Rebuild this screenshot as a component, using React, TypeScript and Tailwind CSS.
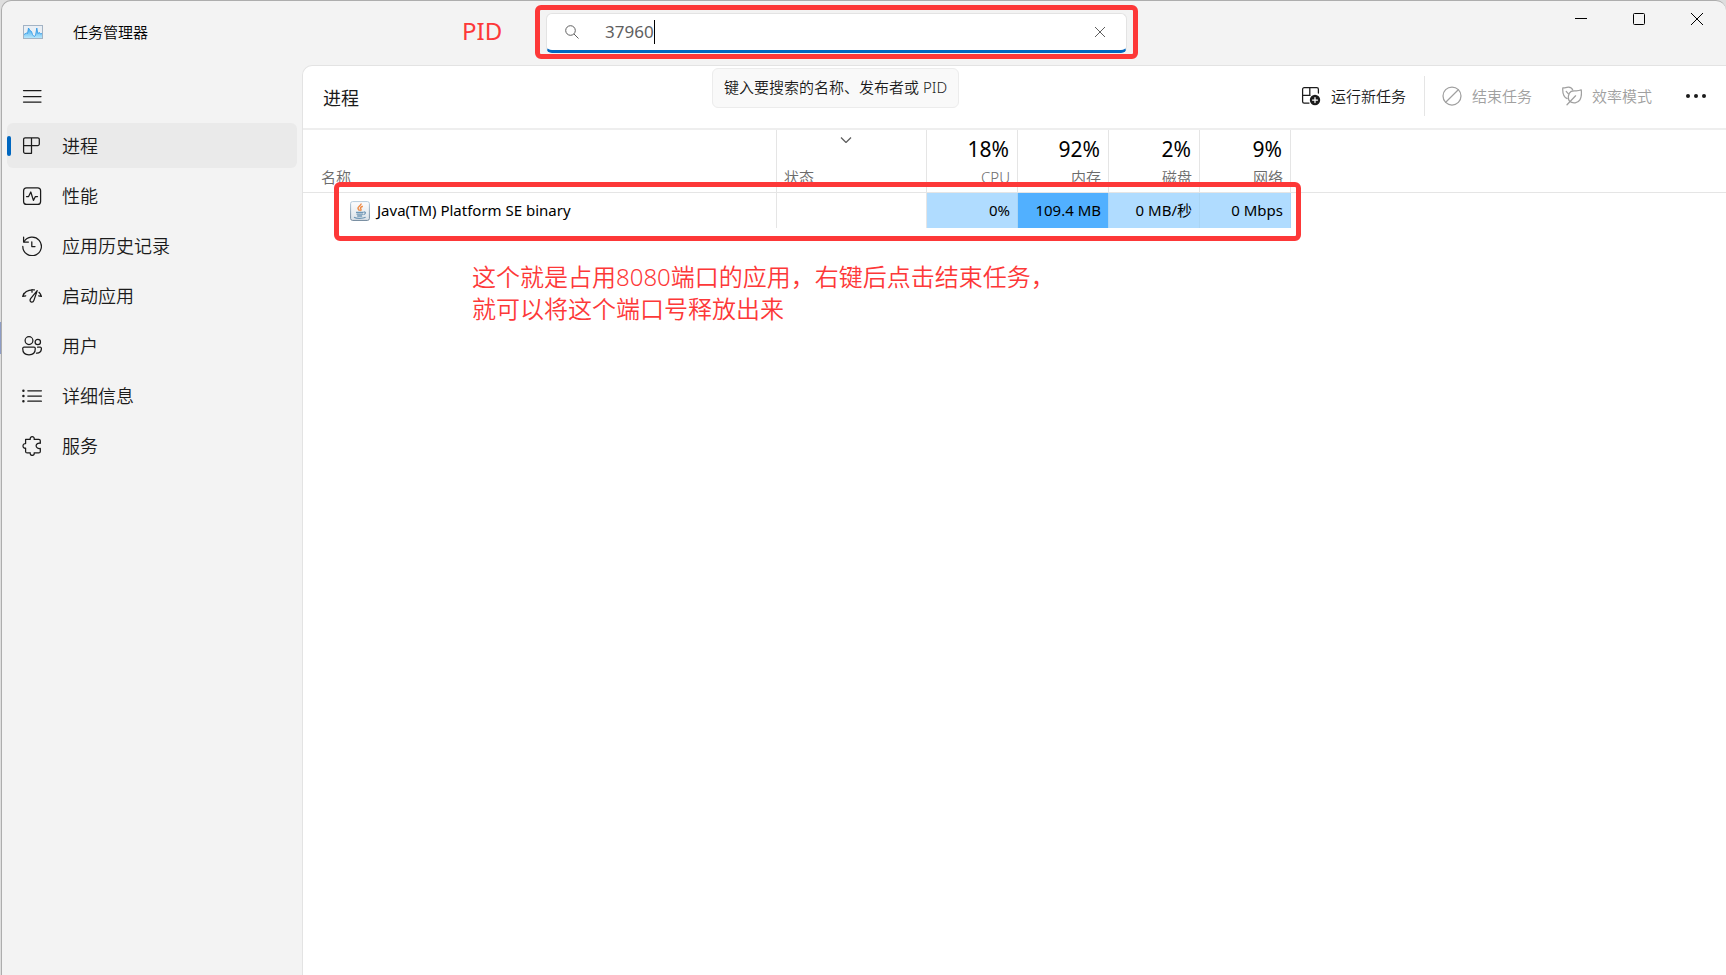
import { ReactNode, useState } from 'react';

interface IconProps {
  children: ReactNode;
}

function Icon({ children }: IconProps) {
  return (
    <svg
      className="size-5 shrink-0"
      viewBox="0 0 20 20"
      fill="none"
      stroke="currentColor"
      strokeWidth="1.25"
      strokeLinecap="round"
      strokeLinejoin="round"
      aria-hidden="true"
    >
      {children}
    </svg>
  );
}

const navItems = [
  {
    id: 'processes',
    label: '进程',
    icon: (
      <path d="M9.5 1.8V17.3H3.2a1.6 1.6 0 0 1-1.6-1.6V3.4a1.6 1.6 0 0 1 1.6-1.6H15.7a1.6 1.6 0 0 1 1.6 1.6V8a1.6 1.6 0 0 1-1.6 1.6H1.6" />
    ),
  },
  {
    id: 'performance',
    label: '性能',
    icon: (
      <>
        <rect x="1.6" y="1.8" width="17" height="16.6" rx="3" />
        <path d="M4.5 10.5H6.6L8.8 6l2.6 8.4 2-3.9h2.1" />
      </>
    ),
  },
  {
    id: 'history',
    label: '应用历史记录',
    icon: (
      <>
        <path d="M1.6 1.2V6H6.4" />
        <path d="M2 5.8A9.3 9.3 0 1 1 .8 10.4" />
        <path d="M9.8 5.8V10.6H13" />
      </>
    ),
  },
  {
    id: 'startup',
    label: '启动应用',
    icon: (
      <>
        <path d="M.7 10.4C2.3 5.8 6 3.4 12.4 3.9M.7 10.4l1.1-3M.7 10.4 3.8 9.8M10 3.7V6.2" />
        <path d="M15.2 4.6 8.6 12.6C7.4 14.4 8.3 16 9.6 16.2c1.2.1 2-.7 2.3-1.8L15.2 4.6Z" />
        <path d="M17 6.3c1.1 1 1.9 2.3 2.4 4.1L16.6 9.8" />
      </>
    ),
  },
  {
    id: 'users',
    label: '用户',
    icon: (
      <>
        <circle cx="7" cy="4.6" r="3.9" />
        <circle cx="15.8" cy="6" r="2.7" />
        <path d="M2 11.2h10a1.3 1.3 0 0 1 1.3 1.3c0 4-2.5 6.3-6.3 6.3S.7 16.5.7 12.5A1.3 1.3 0 0 1 2 11.2Z" />
        <path d="M15.6 11.2h2.6a1.2 1.2 0 0 1 1.2 1.3c0 3-1.9 4.9-4.9 4.7" />
      </>
    ),
  },
  {
    id: 'details',
    label: '详细信息',
    icon: (
      <>
        <path d="M5.8 4.8H19.4M5.8 10H19.4M5.8 15.2H19.4" />
        <path strokeWidth="2.5" d="M1.4 4.8h.01M1.4 10h.01M1.4 15.2h.01" />
      </>
    ),
  },
  {
    id: 'services',
    label: '服务',
    icon: (
      <path d="M3.6 3.3H8.3C7.9 1.7 9 .7 10.2.7s2.4 1 1.9 2.6h4.7a1.5 1.5 0 0 1 1.5 1.5V7.3c-2-.6-4.2.6-4.2 2.5s2.2 3.3 4.2 2.6v3a1.5 1.5 0 0 1-1.5 1.5H12.1c.5 1.6-.7 2.5-1.9 2.5s-2.3-.9-1.9-2.5H5.1a1.5 1.5 0 0 1-1.5-1.5V12.2C2.1 12.5 1 11.3 1 9.9s1.1-2.7 2.6-2.3Z" />
    ),
  },
];

const usageColumns = [
  { label: 'CPU', total: '18%', value: '0%', busy: false },
  { label: '内存', total: '92%', value: '109.4 MB', busy: true },
  { label: '磁盘', total: '2%', value: '0 MB/秒', busy: false },
  { label: '网络', total: '9%', value: '0 Mbps', busy: false },
];

function TaskManagerLogo() {
  return (
    <svg className="h-[14px] w-5" viewBox="0 0 20 14" aria-hidden="true">
      <defs>
        <linearGradient id="graph" x1="0" y1="0" x2="0" y2="1">
          <stop offset="0" stopColor="#3fa9ee" />
          <stop offset="1" stopColor="#b5e6fc" />
        </linearGradient>
      </defs>
      <rect x=".5" y=".5" width="19" height="13" fill="#e9eff5" stroke="#a3b3c4" />
      <path
        fill="url(#graph)"
        d="M1 9.5 3.5 8 4.5 8.5 5.5 3 7 5.5 8.5 6.5 9.5 9.5 11 11.5 12.5 10.5 13.8 3 14.8 8.5 16.5 7.5 17.5 9 19 8.5V13H1Z"
      />
      <path
        fill="none"
        stroke="#2b95e3"
        strokeWidth=".8"
        d="M1 9.5 3.5 8 4.5 8.5 5.5 3 7 5.5 8.5 6.5 9.5 9.5 11 11.5 12.5 10.5 13.8 3 14.8 8.5 16.5 7.5 17.5 9 19 8.5"
      />
    </svg>
  );
}

function JavaIcon() {
  return (
    <svg className="size-5 shrink-0" viewBox="0 0 20 20" fill="none" aria-hidden="true">
      <defs>
        <linearGradient id="tile" x1="0" y1="0" x2="0" y2="1">
          <stop offset="0" stopColor="#fdfdfe" />
          <stop offset="1" stopColor="#dbe2e8" />
        </linearGradient>
        <linearGradient id="edge" x1="0" y1="0" x2="0" y2="1">
          <stop offset="0" stopColor="#b4cadb" />
          <stop offset="1" stopColor="#6d8499" />
        </linearGradient>
      </defs>
      <rect x=".6" y=".6" width="18.8" height="18.8" rx="2" fill="url(#tile)" stroke="url(#edge)" />
      <path
        d="M11 2.5c.8 2-3.6 3-3 5 .3 1 1.200 1.500 1.500 2.300M12.800 5.200c-2.400 1-2.800 2-1.900 3 .5.700 0 1.200-.5 1.600"
        stroke="#ee8b46"
        strokeWidth="1.5"
      />
      <path
        d="M6 11.300h7.500M6.500 13.200h6.500M7.200 15h5M13.800 11c2.300-.3 2 2-.3 2.600M4 16.200c2.500 1.500 9 1.400 11.600 0"
        stroke="#6f96b5"
        strokeWidth="1.3"
      />
    </svg>
  );
}

function TitleBar() {
  const [query, setQuery] = useState('37960');

  return (
    <header className="relative grid h-16 grid-cols-[544px_1fr_599px]">
      <div className="flex items-center gap-[30px] pb-[2px] pl-[21px]">
        <TaskManagerLogo />
        <h1 className="text-[15px] leading-5 font-[350] text-black">任务管理器</h1>
      </div>

      <div className="relative mt-3 h-10">
        <label className="flex h-full items-center overflow-hidden rounded-md border border-[#e3e3e3] border-b-[3px] border-b-[#0067c0] bg-white pl-[18px]">
          <svg className="size-[14px] shrink-0" viewBox="0 0 14 14" fill="none" stroke="#5f5f5f" aria-hidden="true">
            <circle cx="5.5" cy="5.5" r="4.8" />
            <path d="M9 9l4.5 4.5" />
          </svg>
          <input
            type="text"
            aria-label="搜索"
            value={query}
            onChange={(e) => setQuery(e.target.value)}
            className="ml-[26px] w-[49px] text-[17px] leading-6 text-[#5f5f5f] outline-none"
          />
          <span className="h-6 w-px bg-black" />
          <button
            aria-label="清除"
            onClick={() => setQuery('')}
            className="mr-4 ml-auto flex size-5 items-center justify-center"
          >
            <svg className="size-3" viewBox="0 0 12 12" stroke="#5f5f5f" aria-hidden="true">
              <path d="M1 1l10 10M11 1L1 11" />
            </svg>
          </button>
        </label>
        <div className="pointer-events-none absolute -inset-x-[11px] -top-2 -bottom-[6px] rounded-md border-[5px] border-[#fd3838]" />
        <div className="absolute top-[55px] left-[166px] z-10 flex h-10 items-center rounded-md border border-[#ececec] bg-[#f9f9f9] px-[11px] pb-[2px] text-[15px] font-[350] whitespace-nowrap text-[#1b1b1b]">
          键入要搜索的名称、发布者或 PID
        </div>
      </div>

      <div className="flex justify-end text-black">
        <button aria-label="最小化" className="flex h-9 w-[58px] items-center justify-center">
          <svg className="size-3" viewBox="0 0 12 12" stroke="currentColor" aria-hidden="true">
            <path d="M0 5.5H12" />
          </svg>
        </button>
        <button aria-label="最大化" className="flex h-9 w-[58px] items-center justify-center">
          <svg className="size-3" viewBox="0 0 12 12" fill="none" stroke="currentColor" aria-hidden="true">
            <rect x=".5" y=".5" width="11" height="11" rx="1" />
          </svg>
        </button>
        <button aria-label="关闭" className="flex h-9 w-[58px] items-center justify-center">
          <svg className="size-3" viewBox="0 0 12 12" stroke="currentColor" aria-hidden="true">
            <path d="M0 0l12 12M12 0L0 12" />
          </svg>
        </button>
      </div>

      <span className="absolute top-3 left-[460px] text-[24px] leading-9 text-[#fd3838]">PID</span>
    </header>
  );
}

function Sidebar() {
  const [active, setActive] = useState('processes');

  return (
    <nav className="w-[300px] shrink-0 px-[5px] pt-[9px]">
      <button aria-label="打开导航" className="mb-[5px] flex h-11 items-center px-[15px] text-[#1b1b1b]">
        <Icon>
          <path d="M1.5 4.5H19M1.5 10.5H19M1.5 16H19" />
        </Icon>
      </button>
      <div className="flex flex-col gap-[5px]">
        {navItems.map((item) => (
          <button
            key={item.id}
            onClick={() => setActive(item.id)}
            className={`relative flex h-[45px] items-center gap-5 rounded-md px-[15px] text-left text-[18px] font-[350] text-[#1b1b1b] ${
              active === item.id ? 'bg-[#eaeaea]' : ''
            }`}
          >
            {active === item.id && (
              <span className="absolute top-[13px] left-0 h-5 w-1 rounded-full bg-[#0067c0]" />
            )}
            <Icon>{item.icon}</Icon>
            <span className="pt-[2px]">{item.label}</span>
          </button>
        ))}
      </div>
    </nav>
  );
}

function Toolbar() {
  return (
    <div className="flex h-16 items-center border-b-2 border-[#eeeeee] pr-[10px] pl-5">
      <h2 className="pt-[2px] text-[18px] text-[#1b1b1b]">进程</h2>
      <div className="ml-auto flex items-center pb-[2px] text-[15px] font-[350] text-[#1b1b1b]">
        <button className="flex items-center gap-[10px] pr-[18px]">
          <Icon>
            <path d="M8 17H3.2a1.6 1.6 0 0 1-1.6-1.6V3.2a1.6 1.6 0 0 1 1.6-1.6H15.8a1.6 1.6 0 0 1 1.6 1.6V7M8.8 1.6V9.4M1.6 9.4H9" />
            <circle cx="14" cy="14" r="5.2" fill="currentColor" stroke="none" />
            <path stroke="#fff" d="M14 11.5v5M11.5 14h5" />
          </Icon>
          运行新任务
        </button>
        <div className="h-10 w-px bg-[#e5e5e5]" />
        <button disabled className="flex items-center gap-[10px] pr-[15px] pl-[17px] text-[#a0a0a0]">
          <Icon>
            <circle cx="10" cy="10" r="9" />
            <path d="M3.7 16.3 16.3 3.7" />
          </Icon>
          结束任务
        </button>
        <button disabled className="flex items-center gap-[10px] pr-6 pl-[15px] text-[#a0a0a0]">
          <Icon>
            <path d="M5.2 12.6C1.6 11 .4 7 .8 1.8c2 .6 3.300-.8 5.600-.7 2.200.1 3.800 1.200 4.400 3" />
            <path d="M7.600 15.300C5.400 12 6.200 7.200 9.200 5.400c3-1.600 5.600.6 10-1.600.5 3.700.3 7.500-1.300 10-2.100 3.300-6.900 4.300-10.300 1.500Z" />
            <path d="M5 18.800 13.600 9.800M4.200 5.400 6.400 7.800" />
          </Icon>
          效率模式
        </button>
        <button aria-label="更多选项" className="flex size-10 items-center justify-center">
          <svg className="size-5" viewBox="0 0 20 20" fill="currentColor" aria-hidden="true">
            <circle cx="2" cy="10" r="2" />
            <circle cx="10" cy="10" r="2" />
            <circle cx="18" cy="10" r="2" />
          </svg>
        </button>
      </div>
    </div>
  );
}

function ProcessTable() {
  return (
    <div className="relative">
      <table className="w-full table-fixed border-separate border-spacing-0 text-[15px]">
        <colgroup>
          <col className="w-[474px]" />
          <col className="w-[150px]" />
          <col className="w-[91px]" />
          <col className="w-[91px]" />
          <col className="w-[91px]" />
          <col className="w-[91px]" />
          <col />
        </colgroup>
        <thead>
          <tr className="h-[63px] text-[#6b6b6b]">
            <th className="border-r border-b border-[#e5e5e5] pb-[5px] pl-[18px] text-left align-bottom leading-5 font-[350]">
              名称
            </th>
            <th className="border-r border-b border-[#e5e5e5] pr-[18px] pb-[5px] pl-[7px] text-left align-bottom leading-5 font-[350]">
              <svg className="mx-auto mb-6 h-[6px] w-3" viewBox="0 0 12 6" fill="none" stroke="#5f5f5f" strokeWidth="1.3" aria-hidden="true">
                <path d="M1 .5l5 5 5-5" />
              </svg>
              状态
            </th>
            {usageColumns.map((col) => (
              <th
                key={col.label}
                className="border-r border-b border-[#e5e5e5] pr-[7px] pb-[5px] text-right align-bottom leading-5 font-[350]"
              >
                <span className="mb-1 block pr-px text-[21px] leading-7 font-normal text-black">{col.total}</span>
                {col.label}
              </th>
            ))}
            <th className="border-b border-[#e5e5e5]" />
          </tr>
        </thead>
        <tbody>
          <tr className="h-[35px] text-black">
            <td className="border-r border-[#e5e5e5] pl-[47px]">
              <div className="flex items-center gap-[7px]">
                <JavaIcon />
                Java(TM) Platform SE binary
              </div>
            </td>
            <td className="border-r border-[#e5e5e5]" />
            {usageColumns.map((col) => (
              <td
                key={col.label}
                className={`border-r border-[#a9d5f5] pr-[7px] text-right whitespace-nowrap ${
                  col.busy ? 'bg-[#51b0ff]' : 'bg-[#b0dcff]'
                }`}
              >
                {col.value}
              </td>
            ))}
            <td />
          </tr>
        </tbody>
      </table>

      <div className="pointer-events-none absolute top-[52px] left-[31px] h-[59px] w-[967px] rounded-md border-[5px] border-[#fd3838]" />
      <p className="absolute top-[131px] left-[169px] text-[24px] leading-8 font-[350] whitespace-nowrap text-[#fd3838]">
        这个就是占用8080端口的应用，右键后点击结束任务，
        <br />
        就可以将这个端口号释放出来
      </p>
    </div>
  );
}

export default function App() {
  return (
    <div className="relative min-h-screen bg-[#dedede] pl-px font-['Noto_Sans','Noto_Sans_CJK_SC',sans-serif]">
      <span className="absolute top-[322px] left-0 h-8 w-px bg-[#8d9cc5]" />
      <div className="flex min-h-screen flex-col rounded-t-[10px] border-t border-l border-[#adadad] bg-[#f3f3f3]">
        <TitleBar />
        <div className="flex flex-1">
          <Sidebar />
          <main className="min-w-0 flex-1 rounded-tl-[10px] border-t border-l border-[#e3e3e3] bg-white">
            <Toolbar />
            <ProcessTable />
          </main>
        </div>
      </div>
    </div>
  );
}
